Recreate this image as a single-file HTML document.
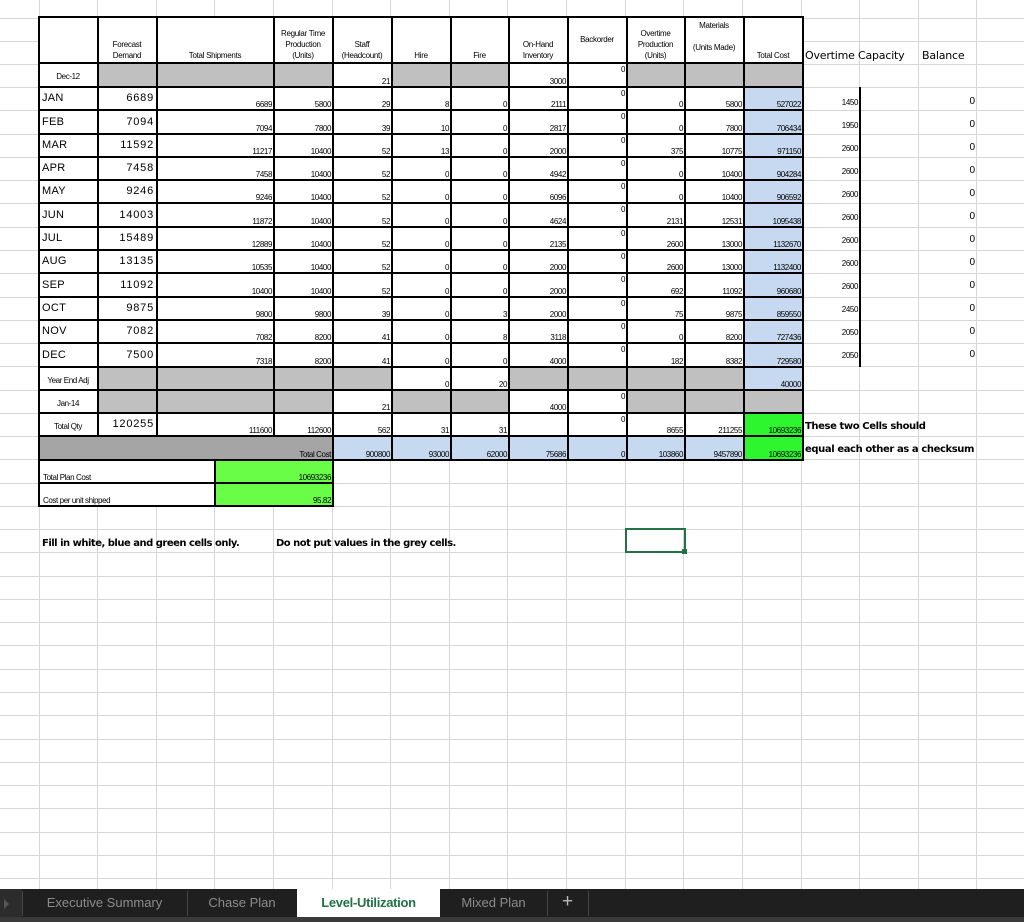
<!DOCTYPE html>
<html><head><meta charset="utf-8"><style>
html,body{margin:0;padding:0;}
body{width:1024px;height:922px;position:relative;overflow:hidden;background:#fff;font-family:"Liberation Sans",Arial,sans-serif;}
table{position:absolute;left:38px;top:16px;border-collapse:collapse;table-layout:fixed;}
td{border:2px solid #000;padding:0 1px 0 0;font-size:8px;text-align:right;vertical-align:bottom;letter-spacing:-0.4px;white-space:nowrap;overflow:hidden;line-height:9px;background:#fff;}
td.h{text-align:center;font-size:8px;line-height:11px;letter-spacing:-0.3px;padding-bottom:1px}
td.m{text-align:left;font-size:11px;vertical-align:middle;padding-left:2px;letter-spacing:0.3px}
td.f{font-size:11px;vertical-align:middle;letter-spacing:0.8px;padding-right:2px}
td.c{text-align:center;vertical-align:middle;padding-top:3px}
td.b{vertical-align:top;padding-top:1px}
td.g{background:#c0c0c0}
td.dg{background:#a5a5a5}
td.bl{background:#c6d9f0}
td.gr{background:#2ef62e}
td.gr2{background:#6afd48}
td.n{border:none;background:transparent}
td.l{text-align:left;padding-left:3px}
.abs{position:absolute;white-space:nowrap}
.cal{font-family:"DejaVu Sans","Liberation Sans",sans-serif}
.oc{position:absolute;left:802px;width:56px;text-align:right;font-size:8px;letter-spacing:-0.4px}
.bal{position:absolute;left:930px;width:45px;text-align:right;font-size:10px}
</style></head><body>
<svg style="position:absolute;left:0;top:0" width="1024" height="922">
<g stroke="#d6d6d6" stroke-width="1">
<line x1="39.5" y1="0" x2="39.5" y2="889"/><line x1="97.5" y1="0" x2="97.5" y2="889"/><line x1="156.5" y1="0" x2="156.5" y2="889"/><line x1="214.5" y1="0" x2="214.5" y2="889"/><line x1="273.5" y1="0" x2="273.5" y2="889"/><line x1="332.5" y1="0" x2="332.5" y2="889"/><line x1="390.5" y1="0" x2="390.5" y2="889"/><line x1="449.5" y1="0" x2="449.5" y2="889"/><line x1="507.5" y1="0" x2="507.5" y2="889"/><line x1="566.5" y1="0" x2="566.5" y2="889"/><line x1="625.5" y1="0" x2="625.5" y2="889"/><line x1="683.5" y1="0" x2="683.5" y2="889"/><line x1="742.5" y1="0" x2="742.5" y2="889"/><line x1="801.5" y1="0" x2="801.5" y2="889"/><line x1="859.5" y1="0" x2="859.5" y2="889"/><line x1="918.5" y1="0" x2="918.5" y2="889"/><line x1="976.5" y1="0" x2="976.5" y2="889"/>
</g>
<g stroke="#d6d6d6" stroke-width="1" id="rows"></g>
<path stroke="#d6d6d6" stroke-width="1" fill="none" d="M0 18.5H1024M0 41.5H1024M0 64.5H1024M0 87.5H1024M0 110.5H1024M0 134.5H1024M0 157.5H1024M0 180.5H1024M0 203.5H1024M0 227.5H1024M0 250.5H1024M0 273.5H1024M0 297.5H1024M0 320.5H1024M0 343.5H1024M0 366.5H1024M0 390.5H1024M0 413.5H1024M0 436.5H1024M0 459.5H1024M0 483.5H1024M0 506.5H1024M0 529.5H1024M0 552.5H1024M0 576.5H1024M0 599.5H1024M0 622.5H1024M0 645.5H1024M0 669.5H1024M0 692.5H1024M0 715.5H1024M0 739.5H1024M0 762.5H1024M0 785.5H1024M0 808.5H1024M0 832.5H1024M0 855.5H1024M0 878.5H1024"/>
</svg>
<table>
<colgroup><col style="width:59px"><col style="width:59px"><col style="width:58px"><col style="width:59px"><col style="width:59px"><col style="width:59px"><col style="width:59px"><col style="width:58px"><col style="width:59px"><col style="width:59px"><col style="width:58px"><col style="width:59px"><col style="width:59px"></colgroup>
<tr style="height:46px"><td class="h"></td><td class="h">Forecast<br>Demand</td><td class="h" colspan="2">Total Shipments</td><td class="h">Regular Time<br>Production<br>(Units)</td><td class="h">Staff<br>(Headcount)</td><td class="h">Hire</td><td class="h">Fire</td><td class="h">On-Hand<br>Inventory</td><td class="h" style="vertical-align:middle">Backorder</td><td class="h">Overtime<br>Production<br>(Units)</td><td class="h" style="vertical-align:top;padding-top:2px">Materials<br><br>(Units Made)</td><td class="h">Total Cost</td></tr>
<tr style="height:24px"><td class="c">Dec-12</td><td class="g"></td><td class="g" colspan="2"></td><td class="g"></td><td>21</td><td class="g"></td><td class="g"></td><td>3000</td><td class="b">0</td><td class="g"></td><td class="g"></td><td class="g"></td></tr>
<tr style="height:23px"><td class="m">JAN</td><td class="f">6689</td><td colspan="2">6689</td><td>5800</td><td>29</td><td>8</td><td>0</td><td>2111</td><td class="b">0</td><td>0</td><td>5800</td><td class="bl">527022</td></tr>
<tr style="height:24px"><td class="m">FEB</td><td class="f">7094</td><td colspan="2">7094</td><td>7800</td><td>39</td><td>10</td><td>0</td><td>2817</td><td class="b">0</td><td>0</td><td>7800</td><td class="bl">706434</td></tr>
<tr style="height:23px"><td class="m">MAR</td><td class="f">11592</td><td colspan="2">11217</td><td>10400</td><td>52</td><td>13</td><td>0</td><td>2000</td><td class="b">0</td><td>375</td><td>10775</td><td class="bl">971150</td></tr>
<tr style="height:23px"><td class="m">APR</td><td class="f">7458</td><td colspan="2">7458</td><td>10400</td><td>52</td><td>0</td><td>0</td><td>4942</td><td class="b">0</td><td>0</td><td>10400</td><td class="bl">904284</td></tr>
<tr style="height:23px"><td class="m">MAY</td><td class="f">9246</td><td colspan="2">9246</td><td>10400</td><td>52</td><td>0</td><td>0</td><td>6096</td><td class="b">0</td><td>0</td><td>10400</td><td class="bl">906592</td></tr>
<tr style="height:24px"><td class="m">JUN</td><td class="f">14003</td><td colspan="2">11872</td><td>10400</td><td>52</td><td>0</td><td>0</td><td>4624</td><td class="b">0</td><td>2131</td><td>12531</td><td class="bl">1095438</td></tr>
<tr style="height:23px"><td class="m">JUL</td><td class="f">15489</td><td colspan="2">12889</td><td>10400</td><td>52</td><td>0</td><td>0</td><td>2135</td><td class="b">0</td><td>2600</td><td>13000</td><td class="bl">1132670</td></tr>
<tr style="height:23px"><td class="m">AUG</td><td class="f">13135</td><td colspan="2">10535</td><td>10400</td><td>52</td><td>0</td><td>0</td><td>2000</td><td class="b">0</td><td>2600</td><td>13000</td><td class="bl">1132400</td></tr>
<tr style="height:24px"><td class="m">SEP</td><td class="f">11092</td><td colspan="2">10400</td><td>10400</td><td>52</td><td>0</td><td>0</td><td>2000</td><td class="b">0</td><td>692</td><td>11092</td><td class="bl">960680</td></tr>
<tr style="height:23px"><td class="m">OCT</td><td class="f">9875</td><td colspan="2">9800</td><td>9800</td><td>39</td><td>0</td><td>3</td><td>2000</td><td class="b">0</td><td>75</td><td>9875</td><td class="bl">859550</td></tr>
<tr style="height:23px"><td class="m">NOV</td><td class="f">7082</td><td colspan="2">7082</td><td>8200</td><td>41</td><td>0</td><td>8</td><td>3118</td><td class="b">0</td><td>0</td><td>8200</td><td class="bl">727436</td></tr>
<tr style="height:24px"><td class="m">DEC</td><td class="f">7500</td><td colspan="2">7318</td><td>8200</td><td>41</td><td>0</td><td>0</td><td>4000</td><td class="b">0</td><td>182</td><td>8382</td><td class="bl">729580</td></tr>
<tr style="height:23px"><td class="c">Year End Adj</td><td class="g"></td><td class="g" colspan="2"></td><td class="g"></td><td class="g"></td><td>0</td><td>20</td><td class="g"></td><td class="g"></td><td class="g"></td><td class="g"></td><td class="bl">40000</td></tr>
<tr style="height:23px"><td class="c">Jan-14</td><td class="g"></td><td class="g" colspan="2"></td><td class="g"></td><td>21</td><td class="g"></td><td class="g"></td><td>4000</td><td class="b">0</td><td class="g"></td><td class="g"></td><td class="g"></td></tr>
<tr style="height:23px"><td class="c">Total Qty</td><td class="f">120255</td><td colspan="2">111600</td><td>112600</td><td>562</td><td>31</td><td>31</td><td></td><td class="b">0</td><td>8655</td><td>211255</td><td class="gr">10693236</td></tr>
<tr style="height:24px"><td class="dg" colspan="5">Total Cost</td><td class="bl">900800</td><td class="bl">93000</td><td class="bl">62000</td><td class="bl">75686</td><td class="bl">0</td><td class="bl">103860</td><td class="bl">9457890</td><td class="gr">10693236</td></tr>
<tr style="height:23px"><td class="l" colspan="3">Total Plan Cost</td><td class="gr2" colspan="2">10693236</td><td class="n" colspan="8"></td></tr>
<tr style="height:23px"><td class="l" colspan="3">Cost per unit shipped</td><td class="gr2" colspan="2">95.82</td><td class="n" colspan="8"></td></tr>
</table>

<div class="abs cal" style="left:805px;top:49px;font-size:11px;letter-spacing:-0.2px">Overtime Capacity</div>
<div class="abs cal" style="left:922px;top:49px;font-size:11px;letter-spacing:-0.2px">Balance</div>
<div style="position:absolute;left:859px;top:87px;width:2px;height:280px;background:#000"></div>
<div class="oc" style="top:98px">1450</div><div class="bal" style="top:96px">0</div>
<div class="oc" style="top:121px">1950</div><div class="bal" style="top:119px">0</div>
<div class="oc" style="top:144px">2600</div><div class="bal" style="top:142px">0</div>
<div class="oc" style="top:167px">2600</div><div class="bal" style="top:165px">0</div>
<div class="oc" style="top:190px">2600</div><div class="bal" style="top:188px">0</div>
<div class="oc" style="top:213px">2600</div><div class="bal" style="top:211px">0</div>
<div class="oc" style="top:236px">2600</div><div class="bal" style="top:234px">0</div>
<div class="oc" style="top:259px">2600</div><div class="bal" style="top:257px">0</div>
<div class="oc" style="top:282px">2600</div><div class="bal" style="top:280px">0</div>
<div class="oc" style="top:305px">2450</div><div class="bal" style="top:303px">0</div>
<div class="oc" style="top:328px">2050</div><div class="bal" style="top:326px">0</div>
<div class="oc" style="top:351px">2050</div><div class="bal" style="top:349px">0</div>

<div class="abs cal" style="left:805px;top:421px;font-size:10px;font-weight:bold;letter-spacing:-0.4px">These two Cells should</div>
<div class="abs cal" style="left:805px;top:444px;font-size:10px;font-weight:bold;letter-spacing:-0.4px">equal each other as a checksum</div>
<div class="abs cal" style="left:42px;top:538px;font-size:10px;font-weight:bold;letter-spacing:-0.5px">Fill in white, blue and green cells only.</div>
<div class="abs cal" style="left:276px;top:538px;font-size:10px;font-weight:bold;letter-spacing:-0.5px">Do not put values in the grey cells.</div>

<div style="position:absolute;left:625px;top:528px;width:57px;height:21px;border:2px solid #217346"></div>
<div style="position:absolute;left:682px;top:549px;width:5px;height:5px;background:#217346"></div>

<div style="position:absolute;left:0;top:889px;width:1024px;height:28px;background:#1f1f1f"></div>
<div style="position:absolute;left:0;top:917px;width:1024px;height:5px;background:#3a3a3a"></div>
<div style="position:absolute;left:0;top:889px;width:22px;height:28px;background:#2c2c2c"></div>
<div style="position:absolute;left:4px;top:899px;width:0;height:0;border-left:5px solid #555;border-top:5px solid transparent;border-bottom:5px solid transparent"></div>
<div style="position:absolute;left:22px;top:891px;width:1px;height:25px;background:#444"></div>
<div class="abs" style="left:22px;top:895px;width:165px;text-align:center;color:#8c8c8c;font-size:13px">Executive Summary</div>
<div style="position:absolute;left:187px;top:891px;width:1px;height:25px;background:#444"></div>
<div class="abs" style="left:187px;top:895px;width:110px;text-align:center;color:#8c8c8c;font-size:13px">Chase Plan</div>
<div style="position:absolute;left:297px;top:889px;width:143px;height:28px;background:#fff"></div>
<div class="abs" style="left:297px;top:895px;width:143px;text-align:center;color:#217346;font-size:13px;font-weight:bold;letter-spacing:-0.3px">Level-Utilization</div>
<div class="abs" style="left:440px;top:895px;width:107px;text-align:center;color:#8c8c8c;font-size:13px">Mixed Plan</div>
<div style="position:absolute;left:547px;top:891px;width:1px;height:25px;background:#444"></div>
<div class="abs" style="left:547px;top:891px;width:41px;text-align:center;color:#bbb;font-size:19px">+</div>
<div style="position:absolute;left:588px;top:891px;width:1px;height:25px;background:#444"></div>
</body></html>
